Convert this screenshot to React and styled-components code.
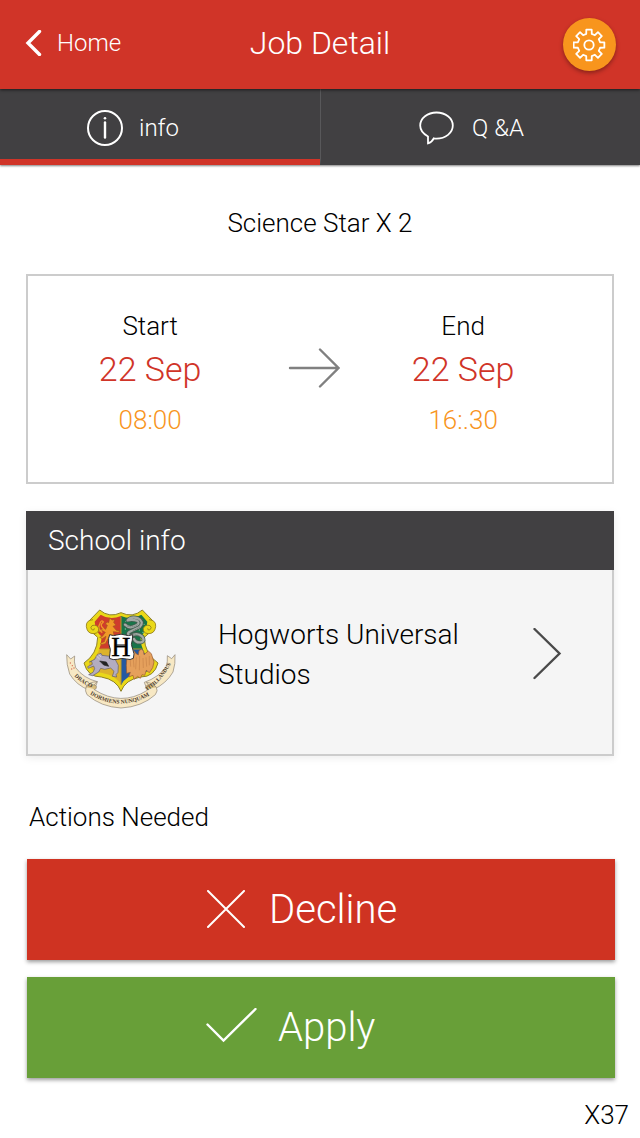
import React from "react";
import styled, { createGlobalStyle } from "styled-components";

const GlobalStyle = createGlobalStyle`
  * {
    box-sizing: border-box;
  }
  body {
    margin: 0;
    background: #fff;
    color: #000;
    font-family: Roboto, "Liberation Sans", sans-serif;
    font-weight: 300;
    font-size: 26px;
    line-height: 32px;
  }
`;

const Header = styled.header`
  position: relative;
  z-index: 1;
  display: grid;
  grid-template-columns: 1fr auto 1fr;
  align-items: center;
  height: 89px;
  padding: 0 24px;
  background: #d03428;
  color: #fff;
  box-shadow: 0 1px 3px rgba(0, 0, 0, 0.6);
`;

const BackLink = styled.a`
  display: flex;
  align-items: center;
  gap: 15px;
  padding-bottom: 4px;
  color: inherit;
  font-size: 24px;
  text-decoration: none;
`;

const Title = styled.h1`
  margin: 0;
  padding-bottom: 4px;
  font-size: 32px;
  font-weight: 350;
  line-height: 40px;
`;

const SettingsButton = styled.button`
  display: flex;
  align-items: center;
  justify-content: center;
  justify-self: end;
  width: 53px;
  height: 53px;
  padding: 0;
  border: 0;
  border-radius: 50%;
  background: #f8951d;
  box-shadow: 0 2px 4px rgba(0, 0, 0, 0.35);
`;

const Tabs = styled.nav`
  display: grid;
  grid-template-columns: 1fr 1fr;
  background: #414042;
  box-shadow: 0 1px 2px rgba(0, 0, 0, 0.5);
`;

const Tab = styled.a`
  display: flex;
  align-items: center;
  justify-content: center;
  gap: ${props => props.$gap}px;
  height: 76px;
  padding: 8px ${props => (props.$active ? 54 : 18)}px 0 0;
  border-bottom: 6px solid ${props => (props.$active ? "#d03428" : "#414042")};
  color: #fff;
  font-size: 24px;
  text-decoration: none;

  & + & {
    border-left: 1px solid #58585a;
  }
`;

const Page = styled.main`
  padding: 42px 26px 0;
`;

const JobName = styled.h2`
  margin: 0 0 35px;
  font-size: 26px;
  font-weight: 300;
  text-align: center;
`;

const Schedule = styled.section`
  display: grid;
  grid-template-columns: 8fr 84px 7fr;
  justify-items: center;
  margin-bottom: 27px;
  padding: 34px 42px 46px 0;
  border: 2px solid #ccc;

  > svg {
    margin-top: 38px;
  }
`;

const Moment = styled.div`
  display: flex;
  flex-direction: column;
  align-items: center;
`;

const Day = styled.span`
  margin: 3px 0 11px;
  color: #d03428;
  font-size: 34px;
  line-height: 48px;
`;

const Time = styled.time`
  color: #f8951d;
  font-size: 26px;
`;

const School = styled.section`
  margin-bottom: 45px;
  box-shadow: 0 2px 8px rgba(0, 0, 0, 0.08);
`;

const SchoolHeading = styled.h2`
  margin: 0;
  padding: 0 22px;
  background: #414042;
  color: #fff;
  font-size: 28px;
  font-weight: 300;
  line-height: 59px;
`;

const SchoolLink = styled.a`
  display: flex;
  align-items: center;
  gap: 42px;
  height: 186px;
  padding: 0 50px 14px 38px;
  border: 2px solid #ccc;
  border-top: 0;
  background: #f5f5f5;
  color: inherit;
  font-size: 28px;
  line-height: 40px;
  text-decoration: none;

  svg {
    flex: none;
  }
`;

const SchoolName = styled.span`
  flex: 1;
`;

const ActionsHeading = styled.h2`
  margin: 0 3px 26px;
  font-size: 26px;
  font-weight: 300;
`;

const ActionButton = styled.button`
  display: flex;
  justify-content: center;
  width: 100%;
  margin-bottom: 17px;
  padding: 0;
  border: 0;
  background: ${props => props.$color};
  color: #fff;
  font: inherit;
  font-size: 40px;
  line-height: 101px;
  box-shadow: 0 2px 4px rgba(0, 0, 0, 0.4);
`;

const Actions = styled.div`
  margin: 0 -1px 0 1px;
`;

const ActionLabel = styled.span`
  display: flex;
  align-items: center;
  gap: ${props => props.$gap}px;
  width: 230px;
`;

const Version = styled.footer`
  padding: 4px 11px 4px;
  text-align: right;
`;

const gearPoint = (radius, degrees) => {
  const a = (degrees * Math.PI) / 180;
  return `${(Math.sin(a) * radius).toFixed(2)} ${(-Math.cos(a) * radius).toFixed(2)}`;
};

const gearPath = `M${[0, 45, 90, 135, 180, 225, 270, 315]
  .map(t =>
    [
      gearPoint(11.4, t - 14),
      gearPoint(15.6, t - 10),
      gearPoint(15.6, t + 10),
      gearPoint(11.4, t + 14),
    ].join("L")
  )
  .join("L")}Z`;

const GearIcon = () => (
  <svg width="34" height="34" viewBox="-16 -17 34 34" fill="none" stroke="#fff" strokeWidth="1.8">
    <path d={gearPath} strokeLinejoin="round" />
    <circle r="4.7" />
  </svg>
);

const BackIcon = () => (
  <svg width="18" height="26" viewBox="0 0 18 26" fill="none" stroke="#fff" strokeWidth="3.4">
    <path d="M15.5 1.5 4 13l11.5 11.5" strokeLinecap="round" />
  </svg>
);

const InfoIcon = () => (
  <svg width="36" height="36" viewBox="0 0 36 36" fill="none" stroke="#fff" strokeWidth="2">
    <circle cx="18" cy="18" r="17" />
    <path d="M18 12.5v15" strokeWidth="2.4" strokeLinecap="round" />
    <circle cx="18" cy="8.3" r="1.3" fill="#fff" stroke="none" />
  </svg>
);

const ChatIcon = () => (
  <svg width="35" height="34" viewBox="0 0 35 34" fill="none" stroke="#fff" strokeWidth="1.8">
    <path d="M17.5 1.5C8.6 1.5 1.2 7.3 1.2 14.6c0 4.5 2.6 8.1 7.8 10.9v6.8c3-.8 5-3.4 5.7-5 1.2.3 1.9.3 2.800.3 9 0 16.3-5.700 16.300-13S26.500 1.500 17.500 1.500Z" />
  </svg>
);

const ArrowIcon = () => (
  <svg width="52" height="40" viewBox="0 0 52 40" fill="none" stroke="#808080" strokeWidth="2.4">
    <path d="M2 20h48.5M32 1.5 50.5 20 32 38.5" strokeLinecap="round" />
  </svg>
);

const ChevronIcon = () => (
  <svg width="30" height="54" viewBox="0 0 30 54" fill="none" stroke="#4a4a4a" strokeWidth="2.4">
    <path d="m2.5 1 25 24.500-25 24.500" strokeLinecap="round" />
  </svg>
);

const CrossIcon = () => (
  <svg width="40" height="40" viewBox="0 0 40 40" fill="none" stroke="#fff" strokeWidth="2">
    <path d="m2 1 36 36M38 1 2 37" strokeLinecap="round" />
  </svg>
);

const CheckIcon = () => (
  <svg width="52" height="40" viewBox="0 0 52 40" fill="none" stroke="#fff" strokeWidth="2.4">
    <path d="m1.500 16.500 16 16L49.500 1" strokeLinecap="round" />
  </svg>
);

const Crest = () => (
  <svg width="110" height="114" viewBox="48 12 330 342" role="img" aria-label="School crest">
    <defs>
      <clipPath id="field">
        <path d="M152 62Q180 80 213 66Q246 80 274 62L292 83Q290 112 271 128Q273 180 310 210Q302 236 269 237Q226 244 213 274Q200 244 157 237Q124 236 116 210Q153 180 155 128Q136 112 134 83Z" />
      </clipPath>
      <path id="ribbonLeft" d="M73 246Q93 269 140 288" />
      <path id="ribbonMid" d="M120 301Q213 358 308 299" />
      <path id="ribbonRight" d="M290 291Q341 260 373 188" />
    </defs>

    {/* motto ribbon */}
    <g fill="#f7e8c4" stroke="#8c8272" strokeWidth="2" strokeLinejoin="round">
      <path d="M50 182l12 13 12-9q-3 18 3 35 24 32 65 42l-8 24-15 2q-40-15-60-49-10-28-9-58Z" />
      <path d="M375 182l-10 12-13-9q1 18-3 33-23 32-66 47l8 22 17 1q42-20 61-54 8-25 6-52Z" />
      <path d="M142 263q-27 1-34 16-4 12 3 23 42 37 102 40 62-3 103-40 9-12 3-22-7-12-30-15 15 14 1 25-77 48-157-3-7-12 9-24Z" />
    </g>
    <path d="M108 280q9-11 27-7 8 4 2 13M319 280q-9-11-27-7-8 4-2 13" fill="#d9bd7d" stroke="#8c8272" strokeWidth="2" />
    <g fill="#d36a55">
      <circle cx="61" cy="207" r="2" />
      <circle cx="67" cy="215" r="2" />
      <circle cx="65" cy="225" r="2" />
      <circle cx="72" cy="222" r="2" />
    </g>
    <g fill="#4d3b2b" fontFamily="Liberation Serif, serif" fontSize="17" fontWeight="700">
      <text>
        <textPath href="#ribbonLeft">DRACO</textPath>
      </text>
      <text>
        <textPath href="#ribbonMid">DORMIENS NUNQUAM</textPath>
      </text>
      <text fontSize="16">
        <textPath href="#ribbonRight">TITILLANDUS</textPath>
      </text>
    </g>

    {/* shield and its four quarters */}
    <path
      d="M149 48Q178 73 213 56Q248 73 277 48L308 80Q313 108 283 130Q284 180 324 207Q313 249 272 249Q226 257 213 292Q200 257 154 249Q113 249 102 207Q142 180 143 130Q113 108 118 80Z"
      fill="#ead818"
      stroke="#8e8128"
      strokeWidth="3"
      strokeLinejoin="round"
    />
    <g clipPath="url(#field)">
      <path d="M100 40h113v125H100Z" fill="#cf3c2c" />
      <path d="M213 40h113v125H213Z" fill="#187449" />
      <path d="M100 165h113v125H100Z" fill="#ddb22a" />
      <path d="M213 165h113v125H213Z" fill="#2459a1" />
    </g>
    <g fill="#8bc7a0">
      <circle cx="228" cy="82" r="2" />
      <circle cx="275" cy="76" r="2" />
      <circle cx="282" cy="91" r="2" />
      <circle cx="268" cy="108" r="2" />
      <circle cx="226" cy="105" r="2" />
      <circle cx="279" cy="115" r="2" />
      <circle cx="247" cy="121" r="2" />
    </g>
    <path d="M213 68v204M151 165h124" stroke="#b99a24" strokeWidth="3" />

    {/* lion */}
    <path
      d="M179 72l7 6 9-1-4 8 7 9-9 3 10 12 9 1-1 5-17-2 2 11-16 7-10 18-13 3-1-5 11-4 5-16-11 7-8-4 8-3 9-12-9-5-12 5-2-5 16-6 8 2 5-12-6-4 6-6 4 2Z"
      fill="#f09a28"
      stroke="#a5541c"
      strokeWidth="2"
    />
    <path d="M157 116q-17-12-7-28 4-12 10-4-10 8-4 15l11 13" fill="none" stroke="#f09a28" strokeWidth="4" />

    {/* serpent */}
    <g fill="none" strokeLinecap="round" strokeLinejoin="round">
      <path d="M225 92q14 13 29 4 18-7 9-15-15-6-30-2 11-13 31-6 20 11 5 26l-31 15q-10 8 4 12 20-12 35 2 9 14-4 17-16 2-21-10" stroke="#435d50" strokeWidth="12" />
      <path d="M225 92q14 13 29 4 18-7 9-15-15-6-30-2 11-13 31-6 20 11 5 26l-31 15q-10 8 4 12 20-12 35 2 9 14-4 17-16 2-21-10" stroke="#a3aaa5" strokeWidth="7" />
      <path d="M232 96q18 7 31-5M249 111l20-12M248 124q14-5 25 7" stroke="#5d706a" strokeWidth="2" strokeDasharray="3 4" />
    </g>

    {/* badger */}
    <path
      d="M134 196l8-14 11-4 3 6 24 3 16 10 9 17-1 21-6 7 2 7-13-2 5-15-10-10-18 4-12-3-6 11-18 11-12-3 13-7 5-11-3-8-16 7-2-5 14-7-2-9-7 2Z"
      fill="#b3acc0"
      stroke="#615b68"
      strokeWidth="2"
    />
    <path d="M149 201l20 3 7 13-15-4Z" fill="#222" stroke="#222" strokeWidth="2" />
    <path d="M139 186l10 9M146 181l7 8" stroke="#e4e1e8" strokeWidth="2" />

    {/* eagle */}
    <path
      d="M231 186l8-11 12-6 6 9 8 5 2-13 8-5 6 7 1 10 13-11 9 8 8 25-4 17-10 15-9-7-5 15-8-2-5 11-8-6-11 9-3-12-13 5 5-14-11 3-1-24Z"
      fill="#e5a05c"
      stroke="#98582f"
      strokeWidth="2"
    />
    <path
      d="M240 186l2 32M249 184l3 36M259 190l-2 36M269 186l-1 43M279 192l1 30M288 190l2 28M298 186v28"
      stroke="#c98348"
      strokeWidth="2"
    />

    {/* scrolls on both shoulders */}
    <g fill="#ead818" stroke="#927d18" strokeWidth="2.5">
      <path d="M129 77q-22 2-20 21 3 22 23 21 16-2 14-16-6-13-20-8-8 6 1 13 7 1 6-5" />
      <path d="M297 77q22 2 20 21-3 22-23 21-16-2-14-16 6-13 20-8 8 6-1 13-7 1-6-5" />
    </g>

    {/* centre plate */}
    <path
      d="M179 122q13 5 21 1 13-5 26 0 9 4 22-1l-1 16q-6 13 1 27 7 15 2 28-9 6-21 2-13-4-27 1-13 3-24-3 2-14 3-27-8-20-5-33Z"
      fill="#fff"
      stroke="#333"
      strokeWidth="3"
    />
    <text
      x="213"
      y="187"
      fontFamily="Liberation Serif, serif"
      fontWeight="400"
      fontSize="80"
      stroke="#000"
      strokeWidth="1"
      textAnchor="middle"
    >
      H
    </text>
    <path d="M199 153h28" stroke="#000" strokeWidth="3" />
  </svg>
);

const moments = [
  { label: "Start", day: "22 Sep", time: "08:00" },
  { label: "End", day: "22 Sep", time: "16:.30" },
];

const renderMoment = ({ label, day, time }) => (
  <Moment>
    <span>{label}</span>
    <Day>{day}</Day>
    <Time>{time}</Time>
  </Moment>
);

export default function App() {
  return (
    <>
      <GlobalStyle />
      <Header>
        <BackLink href="#home">
          <BackIcon />
          Home
        </BackLink>
        <Title>Job Detail</Title>
        <SettingsButton type="button" aria-label="Settings">
          <GearIcon />
        </SettingsButton>
      </Header>
      <Tabs>
        <Tab href="#info" $active $gap={16} aria-current="page">
          <InfoIcon />
          info
        </Tab>
        <Tab href="#qa" $gap={18}>
          <ChatIcon />
          Q &amp;A
        </Tab>
      </Tabs>

      <Page>
        <JobName>Science Star X 2</JobName>

        <Schedule>
          {renderMoment(moments[0])}
          <ArrowIcon />
          {renderMoment(moments[1])}
        </Schedule>

        <School>
          <SchoolHeading>School info</SchoolHeading>
          <SchoolLink href="#school">
            <Crest />
            <SchoolName>Hogworts Universal Studios</SchoolName>
            <ChevronIcon />
          </SchoolLink>
        </School>

        <ActionsHeading>Actions Needed</ActionsHeading>
        <Actions>
          <ActionButton type="button" $color="#cf3322">
            <ActionLabel $gap={23}>
              <CrossIcon />
              Decline
            </ActionLabel>
          </ActionButton>
          <ActionButton type="button" $color="#689f38">
            <ActionLabel $gap={20}>
              <CheckIcon />
              Apply
            </ActionLabel>
          </ActionButton>
        </Actions>
      </Page>
      <Version>X37</Version>
    </>
  );
}
